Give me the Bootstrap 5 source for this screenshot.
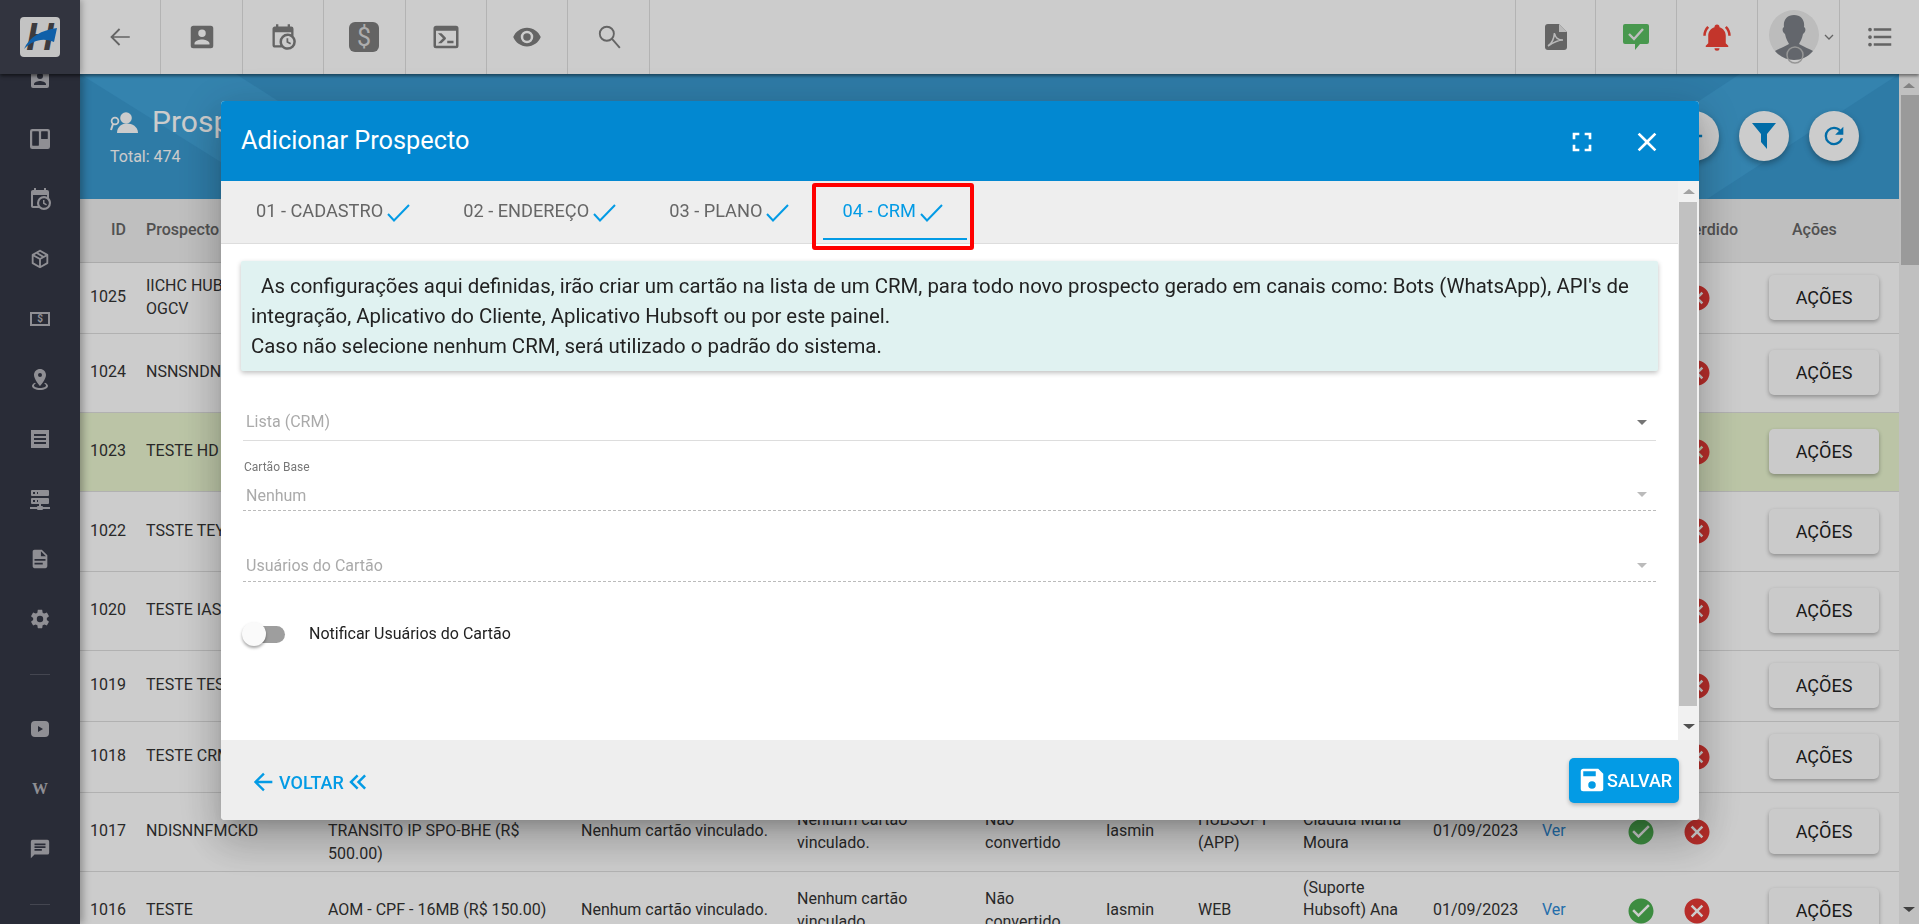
<!DOCTYPE html>
<html lang="pt-BR">
<head>
<meta charset="utf-8">
<title>Adicionar Prospecto</title>
<link href="https://cdn.jsdelivr.net/npm/bootstrap@5.3.0/dist/css/bootstrap.min.css" rel="stylesheet">
<style>
body{font-family:Roboto,"Liberation Sans",sans-serif;background:#fff;color:#333;font-size:16px;height:924px;overflow:hidden}
svg{display:block;fill:currentColor}
.topbar{height:74px;background:#fff;flex:none;position:relative;z-index:3;box-shadow:0 2px 3px rgba(0,0,0,.45)}
.logo-box{width:80px;background:#3f424f;box-shadow:2px 0 6px rgba(0,0,0,.25)}
.logo-mark{width:40px;height:40px}
.tool-cell{width:81.4px;height:74px;color:#7d7d7d;border-right:1px solid #e0e0e0}
.tool-end{width:79px;border-right:0}
.tool-first{border-left:1px solid #e0e0e0}
.tool-right{width:81px}
.tool-user{width:82px;padding-left:10px}
.caret-user{fill:none;stroke:currentColor;stroke-width:1.3;flex:none}
.search-line{fill:none;stroke:currentColor;stroke-width:1.7}
.side-col{width:80px;background:#343745;color:#b3b3b9;flex:none;overflow:hidden;box-shadow:3px 0 8px rgba(0,0,0,.3);position:relative;z-index:2}
.side-list{margin-top:-25px}
.side-item{height:60px}
.side-gap{height:50px}
.side-gap hr{width:20px;margin:0;opacity:1;border-color:#555865}
.wiki{font-family:"Liberation Serif",serif;font-weight:700;font-size:16px;line-height:1}
.money-tag{width:20px;height:14px;border:2px solid #b3b3b9;font-size:10px;line-height:10px;font-weight:700;text-align:center}
.main-col{min-width:0;background:#fff}
.hero{height:125px;background:#3a9ad0;color:#fff;padding:26px 40px 0 30px}
.hero-art{left:0;top:0;width:100%;height:100%}
.hero-head{gap:14px}
.hero-title{font-size:30px;line-height:44px;font-weight:400}
.hero-total{font-size:16px;line-height:20px;margin-top:3px}
.round-btn{width:50px;height:50px;border-radius:50%;background:#fff;color:#0288d1;box-shadow:0 3px 6px rgba(0,0,0,.3);margin-left:20px;margin-top:12px}
.hero-buttons{margin-top:-1px}
.grid-table{table-layout:fixed;width:1819px;margin:0;font-size:16px;line-height:22.4px;--bs-table-bg:transparent;color:#333}
.grid-table th{height:63px;background:#efefef;color:#666;font-size:16px;font-weight:500;padding:0 10px;border-bottom:1px solid #d5d5d5;white-space:nowrap;vertical-align:middle}
.grid-table td{padding:0 10px;border-bottom:1px solid #dedede;color:#333}
.grid-table .th-lost{padding:0;text-align:right}
.grid-table .th-act{padding-left:54px}
.grid-table .td-mark{padding:0 0 0 12px}
.grid-table .td-ok{padding:0 0 0 14px}
.grid-table .td-btn{padding:0 20px 0 31px}
.c1{width:56px}.c2{width:182px}.c3{width:253px}.c4{width:216px}.c5{width:188px}.c6{width:121px}.c7{width:92px}.c8{width:105px}.c9{width:130px}.c10{width:109px}.c11{width:80px}.c12{width:58px}.c13{width:68px}.c14{width:161px}
.r71{height:71px}.r79{height:79px}.r80{height:80px}
.row-won td{background:#eaf6d0}
.ver-link{color:#2d8ad6;text-decoration:none}
.act-btn{width:110px;height:45px;background:#fdfdfd;border:0;border-radius:5px;font-size:18px;font-weight:400;color:#222;box-shadow:0 2px 4px rgba(0,0,0,.3);display:block;padding:0}
.mark-ok{color:#4caf50;width:30px;height:30px}
.mark-no{color:#e53935;width:30px;height:30px}
.page-scroll{width:20px;background:#f1f1f1;flex:none;position:relative}
.bar-thumb{background:#c1c1c1}
.arrow-up{width:0;height:0;border:6px solid transparent;border-top:0;border-bottom:5px solid #a3a3a3;margin:0 auto}
.arrow-down{width:0;height:0;border:6px solid transparent;border-bottom:0;border-top:5px solid #505050;margin:0 auto}
.ps-up{padding-top:9px;height:21px}
.ps-thumb{height:170px;margin-left:2px}
.ps-fill{flex:1}
.ps-down{height:21px;padding-top:4px}
.modal-backdrop{--bs-backdrop-opacity:.2}
.dialog-pos{margin:101px 0 0 221px;width:1478px;max-width:none}
.sheet{height:719px;border:0;border-radius:4px;overflow:hidden;box-shadow:0 11px 15px -7px rgba(0,0,0,.2),0 24px 38px 3px rgba(0,0,0,.14),0 9px 46px 8px rgba(0,0,0,.12);position:relative}
.sheet-head{height:80px;background:#0288d1;color:#fff;padding:0 22px 0 20px;border:0;border-radius:0}
.sheet-title{font-size:25.3px;font-weight:400;line-height:1;margin:0}
.head-btn{width:60px;height:60px;color:#fff;background:none;border:0;padding:0;margin:1px 0 0 0}
.head-wide{margin-left:5px}
.sheet-body{padding:0;height:559px;flex:none}
.tab-strip{height:63px;background:#eee;border-bottom:1px solid #ddd;padding-left:16px;gap:10px;flex-wrap:nowrap}
.tab-link{padding:0 24px 2px 19px;height:62px;color:#666;font-size:18.2px;display:flex;align-items:center;position:relative}
.tab-link svg{margin-left:4px;margin-top:4px;stroke:#039be5;stroke-width:2;fill:none}
.tab-on,.tab-on:hover{color:#039be5}
.tab-on::after{content:"";position:absolute;left:0;right:0;bottom:3px;height:2px;background:#039be5}
.red-frame{left:591px;top:82px;width:162px;height:67px;border:4px solid #f00;border-radius:3px}
.pane{padding:17px 20px 0 20px}
.note-box{background:#e0f2f1;color:#222;font-size:20.4px;line-height:30px;padding:10px 10px 10px;border-radius:2px;box-shadow:0 2px 5px rgba(0,0,0,.25);height:110px;white-space:normal}
.field{margin:0 2px;position:relative}
.field-value{font-size:16px;color:#aaa;padding-left:3px;line-height:20px}
.field-solid{margin-top:40px;height:30px;border-bottom:1px solid #ddd}
.field-solid .field-value,.field-solid .caret-down{margin-bottom:7px}
.field-dash{border-bottom:1px dashed #bbb}
.field-label{font-size:12px;color:#777;line-height:18px;margin-top:17px;height:18px;padding-left:1px}
.field-two{height:35px}
.field-two .field-value{margin-top:5px}
.field-two .caret-down{margin-top:3px}
.field-three{margin-top:35px;height:36px}
.field-three .field-value,.field-three .caret-down{margin-top:4px}
.caret-down{width:0;height:0;border:5px solid transparent;border-bottom:0;border-top-color:#757575;margin-right:9px}
.caret-faded{border-top-color:#bbb}
.switch-row{margin:40px 0 0 3px;height:24px}
.switch-track{width:41px;height:17px;border-radius:9px;background:#9e9e9e;position:relative}
.switch-knob{width:24px;height:24px;border-radius:50%;background:#fafafa;left:-2px;top:-4px;box-shadow:0 2px 3px rgba(0,0,0,.35)}
.switch-text{font-size:16px;color:#222;margin-left:24px}
.modal-scroll{width:21px;background:#f1f1f1;flex:none}
.ms-up{height:21px;padding-top:8px}
.ms-thumb{height:504px;margin-left:1px;margin-right:2px}
.ms-fill{flex:1}
.ms-down{height:22px;padding-top:6px}
.sheet-foot{height:80px;background:#eee;border:0;padding:0 20px 0 28px;border-radius:0;flex-wrap:nowrap}
.back-link{color:#039be5;font-size:18px;font-weight:500;background:none;border:0;padding:4px 0 0;margin:0;gap:2px}
.back-link svg:last-child{margin-left:-3px}
.save-btn{width:110px;height:45px;background:#039be5;color:#fff;border:0;border-radius:5px;font-size:18px;font-weight:500;padding:0 0 0 8px;box-shadow:0 2px 4px rgba(0,0,0,.25);margin:0}
</style>
</head>
<body class="d-flex flex-column">

<svg width="0" height="0" class="position-absolute" aria-hidden="true">
  <symbol id="i-ok" viewBox="0 0 24 24"><path d="M12 2C6.5 2 2 6.5 2 12S6.5 22 12 22 22 17.5 22 12 17.5 2 12 2M10 17L5 12L6.41 10.59L10 14.17L17.59 6.58L19 8L10 17Z"/></symbol>
  <symbol id="i-no" viewBox="0 0 24 24"><path d="M12,2C17.53,2 22,6.47 22,12C22,17.53 17.53,22 12,22C6.47,22 2,17.53 2,12C2,6.47 6.47,2 12,2M15.59,7L12,10.59L8.41,7L7,8.41L10.59,12L7,15.59L8.41,17L12,13.41L15.59,17L17,15.59L13.41,12L17,8.41L15.59,7Z"/></symbol>
  <symbol id="i-contact" viewBox="0 0 24 24"><path d="M6,17C6,15 10,13.9 12,13.9C14,13.9 18,15 18,17V18H6M15,9A3,3 0 0,1 12,12A3,3 0 0,1 9,9A3,3 0 0,1 12,6A3,3 0 0,1 15,9M3,5V19A2,2 0 0,0 5,21H19A2,2 0 0,0 21,19V5A2,2 0 0,0 19,3H5C3.89,3 3,3.9 3,5Z"/></symbol>
  <symbol id="i-cal" viewBox="0 0 24 24"><path d="M15,13H16.5V15.82L18.94,17.23L18.19,18.53L15,16.69V13M19,8H5V19H9.67C9.24,18.09 9,17.07 9,16A7,7 0 0,1 16,9C17.07,9 18.09,9.24 19,9.67V8M5,21C3.89,21 3,20.1 3,19V5C3,3.89 3.89,3 5,3H6V1H8V3H16V1H18V3H19A2,2 0 0,1 21,5V11.1C22.24,12.36 23,14.09 23,16A7,7 0 0,1 16,23C14.09,23 12.36,22.24 11.1,21H5M16,11.15A4.85,4.85 0 0,0 11.15,16C11.15,18.68 13.32,20.85 16,20.85A4.85,4.85 0 0,0 20.85,16C20.85,13.32 18.68,11.15 16,11.15Z"/></symbol>
  <symbol id="i-tick" viewBox="0 0 23 18"><path d="M1 10L7 16.5L22 1"/></symbol>
</svg>

<header class="topbar d-flex">
  <div class="logo-box d-flex align-items-center justify-content-center">
    <svg class="logo-mark" viewBox="0 0 40 40"><rect width="40" height="40" rx="4" fill="#f4f4f4"/>
      <text x="20" y="33" text-anchor="middle" font-family="Liberation Sans" font-weight="700" font-style="italic" font-size="38" fill="#4a4a4f">H</text>
      <path d="M4 32C9 20 22 13 37 11L34 25C22 20 12 24 4 32Z" fill="#1479d4"/></svg>
  </div>
  <div class="tool-cell d-flex align-items-center justify-content-center"><svg width="26" height="26" viewBox="0 0 24 24"><path d="M21 11.2v1.6H6.2l6 6-1.2 1.2-8-8 8-8 1.2 1.2-6 6z"/></svg></div>
  <div class="tool-cell d-flex align-items-center justify-content-center"><svg width="30" height="30"><use href="#i-contact"/></svg></div>
  <div class="tool-cell d-flex align-items-center justify-content-center"><svg width="28" height="28"><use href="#i-cal"/></svg></div>
  <div class="tool-cell d-flex align-items-center justify-content-center"><svg width="30" height="30" viewBox="0 0 30 30"><rect width="30" height="30" rx="6"/><text x="15" y="24" text-anchor="middle" font-family="Roboto" font-size="25" fill="#d9d9d9">$</text></svg></div>
  <div class="tool-cell d-flex align-items-center justify-content-center"><svg width="30" height="30" viewBox="0 0 24 24"><path d="M20,19V7H4V19H20M20,3A2,2 0 0,1 22,5V19A2,2 0 0,1 20,21H4A2,2 0 0,1 2,19V5C2,3.89 2.9,3 4,3H20M13,17V15H18V17H13M9.58,13L5.57,9H8.4L11.7,12.3C12.09,12.69 12.09,13.33 11.7,13.72L8.42,17H5.59L9.58,13Z"/></svg></div>
  <div class="tool-cell d-flex align-items-center justify-content-center"><svg width="30" height="30" viewBox="0 0 24 24"><path d="M12,9A3,3 0 0,0 9,12A3,3 0 0,0 12,15A3,3 0 0,0 15,12A3,3 0 0,0 12,9M12,17A5,5 0 0,1 7,12A5,5 0 0,1 12,7A5,5 0 0,1 17,12A5,5 0 0,1 12,17M12,4.5C7,4.5 2.73,7.61 1,12C2.73,16.39 7,19.5 12,19.5C17,19.5 21.27,16.39 23,12C21.27,7.61 17,4.5 12,4.5Z"/></svg></div>
  <div class="tool-cell d-flex align-items-center justify-content-center"><svg class="search-line" width="26" height="26" viewBox="0 0 24 24"><circle cx="10" cy="9" r="6.5"/><path d="M14.6 13.6L22 22"/></svg></div>
  <div class="flex-grow-1"></div>
  <div class="tool-cell tool-right tool-first d-flex align-items-center justify-content-center"><svg width="22" height="26" viewBox="0 0 22 26"><path d="M3 0H14L22 8V23A3 3 0 0 1 19 26H3A3 3 0 0 1 0 23V3A3 3 0 0 1 3 0Z"/><path d="M14 0V8H22Z" fill="#e8e8e8"/><path d="M3 22C6 20 9 15 9.5 9C10 13 13 16 18 16C14 16 9 18 3 22Z" fill="none" stroke="#e8e8e8" stroke-width="1.6"/></svg></div>
  <div class="tool-cell tool-right d-flex align-items-center justify-content-center"><svg width="26" height="26" viewBox="0 0 26 26"><path d="M2 0H24A2 2 0 0 1 26 2V18A2 2 0 0 1 24 20H17L12 26V20H2A2 2 0 0 1 0 18V2A2 2 0 0 1 2 0Z" fill="#5abf62"/><path d="M6 10L11 15L20 5" fill="none" stroke="#eee" stroke-width="2.4"/></svg></div>
  <div class="tool-cell tool-right d-flex align-items-center justify-content-center"><svg width="30" height="30" viewBox="0 0 24 24"><path fill="#f44336" d="M21,19V20H3V19L5,17V11C5,7.9 7.03,5.17 10,4.29C10,4.19 10,4.1 10,4A2,2 0 0,1 12,2A2,2 0 0,1 14,4C14,4.1 14,4.19 14,4.29C16.97,5.17 19,7.9 19,11V17L21,19M14,21A2,2 0 0,1 12,23A2,2 0 0,1 10,21M19.75,3.19L18.33,4.61C20.04,6.3 21,8.6 21,11H23C23,8.07 21.84,5.25 19.75,3.19M1,11H3C3,8.6 3.96,6.3 5.67,4.61L4.25,3.19C2.16,5.25 1,8.07 1,11Z"/></svg></div>
  <div class="tool-cell tool-user d-flex align-items-center">
    <svg width="52" height="56" viewBox="0 0 52 56"><circle cx="26" cy="26" r="25" fill="#ebebeb"/><path d="M26 6C33 6 37 11 36 18C38 19 38 23 35 25C34 30 32 33 31 35C36 38 42 40 45 42C40 48 33 51 26 51C19 51 12 48 7 42C10 40 16 38 21 35C20 33 18 30 17 25C14 23 14 19 16 18C15 11 19 6 26 6Z" fill="#7c8087"/><circle cx="27" cy="46" r="8" fill="none" stroke="#bcbcbc" stroke-width="1.5"/></svg>
    <svg width="10" height="6" viewBox="0 0 10 6" class="ms-1 caret-user"><path d="M1 1L5 5L9 1"/></svg>
  </div>
  <div class="tool-cell tool-end d-flex align-items-center justify-content-center"><svg width="30" height="30" viewBox="0 0 24 24"><path d="M7,5H21V7H7V5M7,13V11H21V13H7M4,4.5A1.5,1.5 0 0,1 5.5,6A1.5,1.5 0 0,1 4,7.5A1.5,1.5 0 0,1 2.5,6A1.5,1.5 0 0,1 4,4.5M4,10.5A1.5,1.5 0 0,1 5.5,12A1.5,1.5 0 0,1 4,13.5A1.5,1.5 0 0,1 2.5,12A1.5,1.5 0 0,1 4,10.5M7,19V17H21V19H7M4,16.5A1.5,1.5 0 0,1 5.5,18A1.5,1.5 0 0,1 4,19.5A1.5,1.5 0 0,1 2.5,18A1.5,1.5 0 0,1 4,16.5Z"/></svg></div>
</header>

<div class="d-flex flex-grow-1 overflow-hidden">
  <aside class="side-col">
    <div class="side-list">
      <div class="side-item d-flex align-items-center justify-content-center"><svg width="24" height="24"><use href="#i-contact"/></svg></div>
      <div class="side-item d-flex align-items-center justify-content-center"><svg width="20" height="20" viewBox="3 3 18 18"><path d="M5,3H19A2,2 0 0,1 21,5V19A2,2 0 0,1 19,21H5A2,2 0 0,1 3,19V5A2,2 0 0,1 5,3M5.5,5A0.5,0.5 0 0,0 5,5.5V17.5A0.5,0.5 0 0,0 5.5,18H10.5A0.5,0.5 0 0,0 11,17.5V5.5A0.5,0.5 0 0,0 10.5,5H5.5M13.5,5A0.5,0.5 0 0,0 13,5.5V11.5A0.5,0.5 0 0,0 13.5,12H18.5A0.5,0.5 0 0,0 19,11.5V5.5A0.5,0.5 0 0,0 18.5,5H13.5Z"/></svg></div>
      <div class="side-item d-flex align-items-center justify-content-center"><svg width="24" height="24"><use href="#i-cal"/></svg></div>
      <div class="side-item d-flex align-items-center justify-content-center"><svg width="22" height="22" viewBox="0 0 24 24"><path d="M21,16.5C21,16.88 20.79,17.21 20.47,17.38L12.57,21.82C12.41,21.94 12.21,22 12,22C11.79,22 11.59,21.94 11.43,21.82L3.53,17.38C3.21,17.21 3,16.88 3,16.5V7.5C3,7.12 3.21,6.79 3.53,6.62L11.43,2.18C11.59,2.06 11.79,2 12,2C12.21,2 12.41,2.06 12.57,2.18L20.47,6.62C20.79,6.79 21,7.12 21,7.5V16.5M12,4.15L10.11,5.22L16,8.61L17.96,7.5L12,4.15M6.04,7.5L12,10.85L13.96,9.75L8.08,6.35L6.04,7.5M5,15.91L11,19.29V12.58L5,9.21V15.91M19,15.91V9.21L13,12.58V19.29L19,15.91Z"/></svg></div>
      <div class="side-item d-flex align-items-center justify-content-center"><div class="money-tag">$</div></div>
      <div class="side-item d-flex align-items-center justify-content-center"><svg width="24" height="24" viewBox="0 0 24 24"><path d="M12,2C15.31,2 18,4.66 18,7.95C18,12.41 12,19 12,19C12,19 6,12.41 6,7.95C6,4.66 8.69,2 12,2M12,6A2,2 0 0,0 10,8A2,2 0 0,0 12,10A2,2 0 0,0 14,8A2,2 0 0,0 12,6M20,19C20,21.21 16.42,23 12,23C7.58,23 4,21.21 4,19C4,17.71 5.22,16.56 7.11,15.83L7.75,16.74C6.67,17.19 6,17.81 6,18.5C6,19.88 8.69,21 12,21C15.31,21 18,19.88 18,18.5C18,17.81 17.33,17.19 16.25,16.74L16.89,15.83C18.78,16.56 20,17.71 20,19Z"/></svg></div>
      <div class="side-item d-flex align-items-center justify-content-center"><svg width="18" height="18" viewBox="0 0 18 18"><path d="M0 0H18V18H0ZM3 4V6H15V4ZM3 8V10H15V8ZM3 12V14H15V12Z" fill-rule="evenodd"/></svg></div>
      <div class="side-item d-flex align-items-center justify-content-center"><svg width="24" height="24" viewBox="0 0 24 24"><path d="M13,19H14A1,1 0 0,1 15,20H22V22H15A1,1 0 0,1 14,23H10A1,1 0 0,1 9,22H2V20H9A1,1 0 0,1 10,19H11V17H4A1,1 0 0,1 3,16V12A1,1 0 0,1 4,11H20A1,1 0 0,1 21,12V16A1,1 0 0,1 20,17H13V19M4,3H20A1,1 0 0,1 21,4V8A1,1 0 0,1 20,9H4A1,1 0 0,1 3,8V4A1,1 0 0,1 4,3M9,7H10V5H9V7M9,15H10V13H9V15M5,5V7H7V5H5M5,13V15H7V13H5Z"/></svg></div>
      <div class="side-item d-flex align-items-center justify-content-center"><svg width="22" height="22" viewBox="0 0 24 24"><path d="M13,9H18.5L13,3.5V9M6,2H14L20,8V20A2,2 0 0,1 18,22H6C4.89,22 4,21.1 4,20V4C4,2.89 4.89,2 6,2M15,18V16H6V18H15M18,14V12H6V14H18Z"/></svg></div>
      <div class="side-item d-flex align-items-center justify-content-center"><svg width="22" height="22" viewBox="0 0 24 24"><path d="M12,15.5A3.5,3.5 0 0,1 8.5,12A3.5,3.5 0 0,1 12,8.5A3.5,3.5 0 0,1 15.5,12A3.5,3.5 0 0,1 12,15.5M19.43,12.97C19.47,12.65 19.5,12.33 19.5,12C19.5,11.67 19.47,11.34 19.43,11L21.54,9.37C21.73,9.22 21.78,8.95 21.66,8.73L19.66,5.27C19.54,5.05 19.27,4.96 19.05,5.05L16.56,6.05C16.04,5.66 15.5,5.32 14.87,5.07L14.5,2.42C14.46,2.18 14.25,2 14,2H10C9.75,2 9.54,2.18 9.5,2.42L9.13,5.07C8.5,5.32 7.96,5.66 7.44,6.05L4.95,5.05C4.73,4.96 4.46,5.05 4.34,5.27L2.34,8.73C2.21,8.95 2.27,9.22 2.46,9.37L4.57,11C4.53,11.34 4.5,11.67 4.5,12C4.5,12.33 4.53,12.65 4.57,12.97L2.46,14.63C2.27,14.78 2.21,15.05 2.34,15.27L4.34,18.73C4.46,18.95 4.73,19.03 4.95,18.95L7.44,17.94C7.96,18.34 8.5,18.68 9.13,18.93L9.5,21.58C9.54,21.82 9.75,22 10,22H14C14.25,22 14.46,21.82 14.5,21.58L14.87,18.93C15.5,18.67 16.04,18.34 16.56,17.94L19.05,18.95C19.27,19.03 19.54,18.95 19.66,18.73L21.66,15.27C21.78,15.05 21.73,14.78 21.54,14.63L19.43,12.97Z"/></svg></div>
      <div class="side-gap d-flex align-items-center justify-content-center"><hr></div>
      <div class="side-item d-flex align-items-center justify-content-center"><svg width="18" height="16" viewBox="0 0 18 16"><path d="M4 0H14A4 4 0 0 1 18 4V12A4 4 0 0 1 14 16H4A4 4 0 0 1 0 12V4A4 4 0 0 1 4 0ZM7 5V11L12 8Z" fill-rule="evenodd"/></svg></div>
      <div class="side-item d-flex align-items-center justify-content-center"><span class="wiki">W</span></div>
      <div class="side-item d-flex align-items-center justify-content-center"><svg width="22" height="22" viewBox="0 0 24 24"><path d="M20,2H4A2,2 0 0,0 2,4V22L6,18H20A2,2 0 0,0 22,16V4A2,2 0 0,0 20,2M6,9H18V11H6M14,14H6V12H14M18,8H6V6H18"/></svg></div>
      <div class="side-gap d-flex align-items-center justify-content-center"><hr></div>
    </div>
  </aside>

  <main class="main-col flex-grow-1">
    <section class="hero position-relative d-flex justify-content-between">
      <svg class="hero-art position-absolute" viewBox="0 0 1819 125" preserveAspectRatio="none"><polygon points="0,0 156,0 350,125 200,125" fill="#41a4da"/><polygon points="1660,0 1819,0 1627,125 1470,125" fill="#41a4da"/></svg>
      <div class="position-relative">
        <div class="d-flex align-items-center hero-head">
          <svg width="28" height="21" viewBox="0 0 28 21"><circle cx="16" cy="6" r="5.8"/><path d="M7 21C7 14.5 12 11.5 17 11.5C22 11.5 28 14.5 28 21Z"/><circle cx="5" cy="9" r="3.4" fill="none" stroke="currentColor" stroke-width="1.8"/><path d="M3 12L1 18" stroke="currentColor" stroke-width="2"/></svg>
          <div class="hero-title">Prospectos</div>
        </div>
        <div class="hero-total">Total: 474</div>
      </div>
      <div class="position-relative d-flex hero-buttons">
        <div class="round-btn d-flex align-items-center justify-content-center"><svg width="28" height="28" viewBox="0 0 24 24"><path d="M19,13H13V19H11V13H5V11H11V5H13V11H19V13Z"/></svg></div>
        <div class="round-btn d-flex align-items-center justify-content-center"><svg width="24" height="26" viewBox="0 0 24 26"><path d="M0 0H24L15 11V26L9 19V11Z"/></svg></div>
        <div class="round-btn d-flex align-items-center justify-content-center"><svg width="28" height="28" viewBox="0 0 24 24"><path d="M17.65,6.35C16.2,4.9 14.21,4 12,4A8,8 0 0,0 4,12A8,8 0 0,0 12,20C15.73,20 18.84,17.45 19.73,14H17.65C16.83,16.33 14.61,18 12,18A6,6 0 0,1 6,12A6,6 0 0,1 12,6C13.66,6 15.14,6.69 16.22,7.78L13,11H20V4L17.65,6.35Z"/></svg></div>
      </div>
    </section>

    <table class="table grid-table align-middle">
      <colgroup><col class="c1"><col class="c2"><col class="c3"><col class="c4"><col class="c5"><col class="c6"><col class="c7"><col class="c8"><col class="c9"><col class="c10"><col class="c11"><col class="c12"><col class="c13"><col class="c14"></colgroup>
      <thead><tr><th class="text-end">ID</th><th>Prospecto</th><th></th><th></th><th></th><th></th><th></th><th></th><th></th><th></th><th></th><th></th><th class="th-lost">Perdido</th><th class="th-act">Ações</th></tr></thead>
      <tbody>
        <tr class="r71"><td>1025</td><td>IICHC HUB<br>OGCV</td><td colspan="9"></td><td class="td-ok"><svg class="mark-ok"><use href="#i-ok"/></svg></td><td class="td-mark"><svg class="mark-no"><use href="#i-no"/></svg></td><td class="td-btn"><button class="btn act-btn">AÇÕES</button></td></tr>
        <tr class="r79"><td>1024</td><td>NSNSNDN</td><td colspan="9"></td><td class="td-ok"><svg class="mark-ok"><use href="#i-ok"/></svg></td><td class="td-mark"><svg class="mark-no"><use href="#i-no"/></svg></td><td class="td-btn"><button class="btn act-btn">AÇÕES</button></td></tr>
        <tr class="r79 row-won"><td>1023</td><td>TESTE HD</td><td colspan="9"></td><td class="td-ok"><svg class="mark-ok"><use href="#i-ok"/></svg></td><td class="td-mark"><svg class="mark-no"><use href="#i-no"/></svg></td><td class="td-btn"><button class="btn act-btn">AÇÕES</button></td></tr>
        <tr class="r80"><td>1022</td><td>TSSTE TEY</td><td colspan="9"></td><td class="td-ok"><svg class="mark-ok"><use href="#i-ok"/></svg></td><td class="td-mark"><svg class="mark-no"><use href="#i-no"/></svg></td><td class="td-btn"><button class="btn act-btn">AÇÕES</button></td></tr>
        <tr class="r79"><td>1020</td><td>TESTE IAS</td><td colspan="9"></td><td class="td-ok"><svg class="mark-ok"><use href="#i-ok"/></svg></td><td class="td-mark"><svg class="mark-no"><use href="#i-no"/></svg></td><td class="td-btn"><button class="btn act-btn">AÇÕES</button></td></tr>
        <tr class="r71"><td>1019</td><td>TESTE TES</td><td colspan="9"></td><td class="td-ok"><svg class="mark-ok"><use href="#i-ok"/></svg></td><td class="td-mark"><svg class="mark-no"><use href="#i-no"/></svg></td><td class="td-btn"><button class="btn act-btn">AÇÕES</button></td></tr>
        <tr class="r71"><td>1018</td><td>TESTE CRM</td><td colspan="9"></td><td class="td-ok"><svg class="mark-ok"><use href="#i-ok"/></svg></td><td class="td-mark"><svg class="mark-no"><use href="#i-no"/></svg></td><td class="td-btn"><button class="btn act-btn">AÇÕES</button></td></tr>
        <tr class="r79"><td>1017</td><td>NDISNNFMCKD</td><td><br>TRANSITO IP SPO-BHE (R$ 500.00)</td><td>Nenhum cartão vinculado.</td><td>Nenhum cartão vinculado.</td><td>Não convertido</td><td>Iasmin</td><td>HUBSOFT (APP)</td><td>Claudia Maria Moura</td><td>01/09/2023</td><td><a class="ver-link" href="#">Ver</a></td><td class="td-ok"><svg class="mark-ok"><use href="#i-ok"/></svg></td><td class="td-mark"><svg class="mark-no"><use href="#i-no"/></svg></td><td class="td-btn"><button class="btn act-btn">AÇÕES</button></td></tr>
        <tr class="r79"><td>1016</td><td>TESTE</td><td>AOM - CPF - 16MB (R$ 150.00)</td><td>Nenhum cartão vinculado.</td><td>Nenhum cartão vinculado.</td><td>Não convertido</td><td>Iasmin</td><td>WEB</td><td>(Suporte Hubsoft) Ana Claudia</td><td>01/09/2023</td><td><a class="ver-link" href="#">Ver</a></td><td class="td-ok"><svg class="mark-ok"><use href="#i-ok"/></svg></td><td class="td-mark"><svg class="mark-no"><use href="#i-no"/></svg></td><td class="td-btn"><button class="btn act-btn">AÇÕES</button></td></tr>
      </tbody>
    </table>
  </main>

  <div class="page-scroll d-flex flex-column">
    <div class="ps-up"><div class="arrow-up"></div></div>
    <div class="bar-thumb ps-thumb"></div>
    <div class="ps-fill"></div>
    <div class="ps-down"><div class="arrow-down"></div></div>
  </div>
</div>

<div class="modal-backdrop show"></div>

<div class="modal d-block" role="dialog" aria-modal="true">
  <div class="modal-dialog dialog-pos">
    <div class="modal-content sheet">
      <div class="modal-header sheet-head d-flex justify-content-between">
        <h5 class="modal-title sheet-title">Adicionar Prospecto</h5>
        <div class="d-flex">
          <button class="head-btn d-flex align-items-center justify-content-center" aria-label="Tela cheia"><svg width="32" height="32" viewBox="0 0 24 24"><path d="M5,5H10V7H7V10H5V5M14,5H19V10H17V7H14V5M17,14H19V19H14V17H17V14M10,17V19H5V14H7V17H10Z"/></svg></button>
          <button class="head-btn head-wide d-flex align-items-center justify-content-center" aria-label="Fechar"><svg width="32" height="32" viewBox="0 0 24 24"><path d="M19,6.41L17.59,5L12,10.59L6.41,5L5,6.41L10.59,12L5,17.59L6.41,19L12,13.41L17.59,19L19,17.59L13.41,12L19,6.41Z"/></svg></button>
        </div>
      </div>
      <div class="modal-body sheet-body d-flex">
        <div class="flex-grow-1">
          <ul class="nav tab-strip">
            <li class="nav-item"><a class="nav-link tab-link" href="#">01 - CADASTRO<svg width="23" height="18"><use href="#i-tick"/></svg></a></li>
            <li class="nav-item"><a class="nav-link tab-link" href="#">02 - ENDEREÇO<svg width="23" height="18"><use href="#i-tick"/></svg></a></li>
            <li class="nav-item"><a class="nav-link tab-link" href="#">03 - PLANO<svg width="23" height="18"><use href="#i-tick"/></svg></a></li>
            <li class="nav-item"><a class="nav-link tab-link tab-on active" href="#">04 - CRM<svg width="23" height="18"><use href="#i-tick"/></svg></a></li>
          </ul>
          <div class="pane">
            <div class="note-box">&nbsp;&nbsp;As configurações aqui definidas, irão criar um cartão na lista de um CRM, para todo novo prospecto gerado em canais como: Bots (WhatsApp), API's de integração, Aplicativo do Cliente, Aplicativo Hubsoft ou por este painel.<br>Caso não selecione nenhum CRM, será utilizado o padrão do sistema.</div>
            <div class="field field-solid d-flex justify-content-between align-items-center"><span class="field-value">Lista (CRM)</span><span class="caret-down"></span></div>
            <div class="field"><div class="field-label">Cartão Base</div><div class="field-two field-dash d-flex justify-content-between align-items-center"><span class="field-value">Nenhum</span><span class="caret-down caret-faded"></span></div></div>
            <div class="field field-three field-dash d-flex justify-content-between align-items-center"><span class="field-value">Usuários do Cartão</span><span class="caret-down caret-faded"></span></div>
            <div class="switch-row d-flex align-items-center"><div class="switch-track"><div class="switch-knob position-absolute"></div></div><span class="switch-text">Notificar Usuários do Cartão</span></div>
          </div>
        </div>
        <div class="modal-scroll d-flex flex-column">
          <div class="ms-up"><div class="arrow-up"></div></div>
          <div class="bar-thumb ms-thumb"></div>
          <div class="ms-fill"></div>
          <div class="ms-down"><div class="arrow-down"></div></div>
        </div>
      </div>
      <div class="modal-footer sheet-foot d-flex justify-content-between">
        <button class="back-link d-flex align-items-center"><svg width="28" height="28" viewBox="0 0 24 24"><path d="M20,11V13H8L13.5,18.5L12.08,19.92L4.16,12L12.08,4.08L13.5,5.5L8,11H20Z"/></svg>VOLTAR<svg width="30" height="30" viewBox="0 0 24 24"><path d="M18.41,7.41L17,6L11,12L17,18L18.41,16.59L13.83,12L18.41,7.41M12.41,7.41L11,6L5,12L11,18L12.41,16.59L7.83,12L12.41,7.41Z"/></svg></button>
        <button class="save-btn d-flex align-items-center"><svg width="30" height="30" viewBox="0 0 24 24"><path d="M15,9H5V5H15M12,19A3,3 0 0,1 9,16A3,3 0 0,1 12,13A3,3 0 0,1 15,16A3,3 0 0,1 12,19M17,3H5C3.89,3 3,3.9 3,5V19A2,2 0 0,0 5,21H19A2,2 0 0,0 21,19V7L17,3Z"/></svg>SALVAR</button>
      </div>
      <div class="red-frame position-absolute" aria-hidden="true"></div>
    </div>
  </div>
</div>

<script src="https://cdn.jsdelivr.net/npm/bootstrap@5.3.0/dist/js/bootstrap.bundle.min.js"></script>
</body>
</html>
